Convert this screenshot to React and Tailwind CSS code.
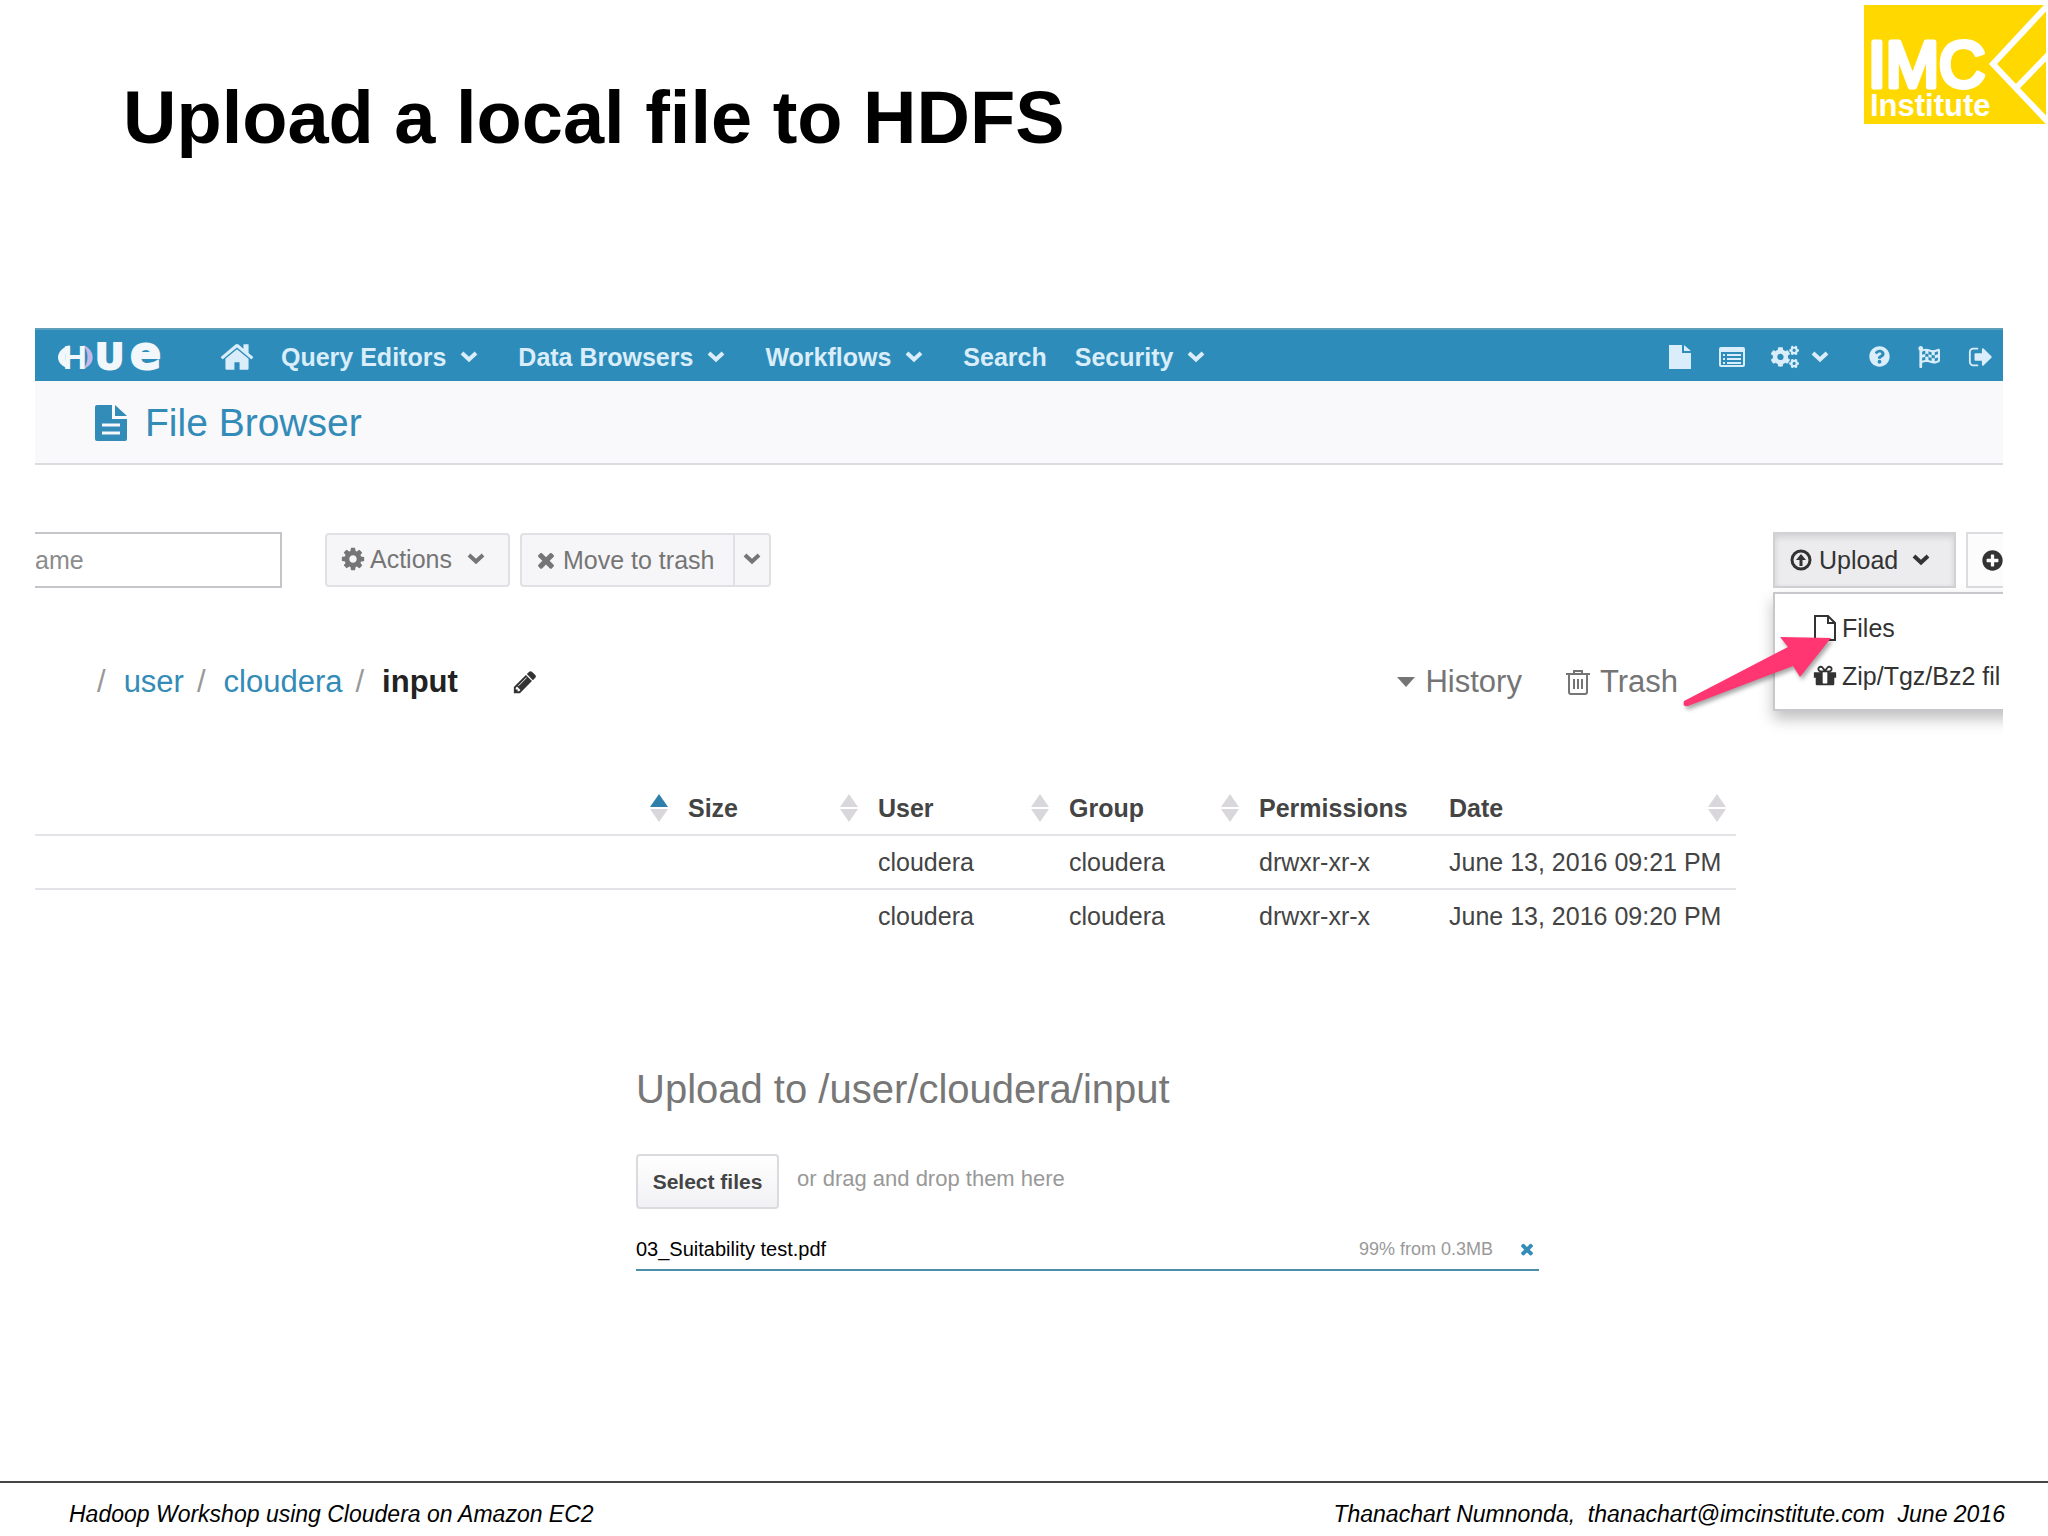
import { FaCogs, FaFlagCheckered, FaPlusCircle, FaQuestionCircle } from "react-icons/fa"

function Glyph({ d, className }) {
  return (
    <svg viewBox="0 0 1792 1792" fill="currentColor" aria-hidden="true" className={className}>
      <path d={d} />
    </svg>
  )
}

const glyphs = {
  home: "M1472 992v480q0 26-19 45t-45 19h-384v-384h-256v384h-384q-26 0-45-19t-19-45v-480q0-1 .5-3t.5-3l575-474 575 474q1 2 1 6zm223-69l-62 74q-8 9-21 11h-3q-13 0-21-7l-692-577-692 577q-12 8-24 7-13-2-21-11l-62-74q-8-10-7-23.5t11-21.5l719-599q32-26 76-26t76 26l244 204v-195q0-14 9-23t23-9h192q14 0 23 9t9 23v408l219 182q10 8 11 21.5t-7 23.5z",
  cog: "M1152 896q0-106-75-181t-181-75-181 75-75 181 75 181 181 75 181-75 75-181zm512-109v222q0 12-8 23t-20 13l-185 28q-19 54-39 91 35 50 107 138 10 12 10 25t-9 23q-27 37-99 108t-94 71q-12 0-26-9l-138-108q-44 23-91 38-16 136-29 186-7 28-36 28h-222q-14 0-24.5-8.5t-11.5-21.5l-28-184q-49-16-90-37l-141 107q-10 9-25 9-14 0-25-11-126-114-165-168-7-10-7-23 0-12 8-23 15-21 51-66.5t54-70.5q-27-50-41-99l-183-27q-13-2-21-12.5t-8-23.5v-222q0-12 8-23t19-13l186-28q14-46 39-92-40-57-107-138-10-12-10-24 0-10 9-23 26-36 98.5-107.5t94.5-71.5q13 0 26 10l138 107q44-23 91-38 16-136 29-186 7-28 36-28h222q14 0 24.5 8.5t11.5 21.5l28 184q49 16 90 37l142-107q9-9 24-9 13 0 25 10 129 119 165 170 7 8 7 22 0 12-8 23-15 21-51 66.5t-54 70.5q26 50 41 98l183 28q13 2 21 12.5t8 23.5z",
  times: "M1490 1322q0 40-28 68l-136 136q-28 28-68 28t-68-28l-294-294-294 294q-28 28-68 28t-68-28l-136-136q-28-28-28-68t28-68l294-294-294-294q-28-28-28-68t28-68l136-136q28-28 68-28t68 28l294 294 294-294q28-28 68-28t68 28l136 136q28 28 28 68t-28 68l-294 294 294 294q28 28 28 68z",
  pencil: "M491 1536l91-91-235-235-91 91v107h128v128h107zm523-928q0-22-22-22-10 0-17 7l-542 542q-7 7-7 17 0 22 22 22 10 0 17-7l542-542q7-7 7-17zm-54-192l416 416-832 832h-416v-416zm683 96q0 53-37 90l-166 166-416-416 166-165q36-38 90-38 53 0 91 38l235 234q37 39 37 91z",
  gift: "M1056 1356v-716h-320v716q0 25 18 38.5t46 13.5h192q28 0 46-13.5t18-38.5zm-456-844h195l-126-161q-26-31-69-31-40 0-68 28t-28 68 28 68 68 28zm688-96q0-40-28-68t-68-28q-43 0-69 31l-125 161h194q40 0 68-28t28-68zm376 256v320q0 14-9 23t-23 9h-96v416q0 40-28 68t-68 28h-1088q-40 0-68-28t-28-68v-416h-96q-14 0-23-9t-9-23v-320q0-14 9-23t23-9h440q-93 0-158.5-65.5t-65.5-158.5 65.5-158.5 158.5-65.5q107 0 168 77l128 165 128-165q61-77 168-77 93 0 158.5 65.5t65.5 158.5-65.5 158.5-158.5 65.5h440q14 0 23 9t9 23z",
  signOut: "M704 1440q0 4 1 20t.5 26.5-3 23.5-10 19.5-20.5 6.5h-320q-119 0-203.5-84.5t-84.5-203.5v-704q0-119 84.5-203.5t203.5-84.5h320q13 0 22.5 9.5t9.5 22.5q0 4 1 20t.5 26.5-3 23.5-10 19.5-20.5 6.5h-320q-66 0-113 47t-47 113v704q0 66 47 113t113 47h312l11.5 1 11.5 3 8 5.5 7 9 2 13.5zm928-544q0 26-19 45l-544 544q-19 19-45 19t-45-19-19-45v-288h-448q-26 0-45-19t-19-45v-384q0-26 19-45t45-19h448v-288q0-26 19-45t45-19 45 19l544 544q19 19 19 45z",
}

function Chevron() {
  return (
    <svg viewBox="0 0 18 12" fill="none" stroke="currentColor" strokeWidth="4" aria-hidden="true" className="w-[18px] h-3 shrink-0">
      <path d="M2 2 L9 8.5 L16 2" />
    </svg>
  )
}

function ImcLogo() {
  return (
    <svg viewBox="0 0 182 119" role="img" aria-label="IMC Institute" className="w-[182px] h-[119px]">
      <rect width="182" height="119" fill="#ffd800" />
      <g fill="none" stroke="#fff" strokeWidth="6">
        <path d="M184 0 L129 59 L184 117" />
        <path d="M152 83 L184 50" />
      </g>
      <g fill="#fff" stroke="#fff" strokeLinejoin="round" className="font-['Liberation_Sans',Arial,sans-serif]">
        <text x="4" y="82" fontSize="64" strokeWidth="5">IMC</text>
        <text x="6" y="111" fontSize="31" strokeWidth="0" className="font-bold">Institute</text>
      </g>
    </svg>
  )
}

function HueLogo() {
  return (
    <svg viewBox="0 0 108 28" role="img" aria-label="HUE" className="w-[108px] h-7 overflow-visible">
      <path d="M12 2 C-4 7 -4 22 12 26 C6 20 6 8 12 2Z" fill="#f2f7fb" />
      <path d="M25 2 C38 7 38 22 25 26 C31 20 31 8 25 2Z" fill="#c3b8ea" />
      <g fill="#f2f7fb" stroke="#f2f7fb">
        <text x="5" y="26" fontSize="33" strokeWidth="0" className="font-['Liberation_Sans',Arial,sans-serif] font-bold">H</text>
        <text x="37" y="26" fontSize="36" strokeWidth="2" className="font-['DejaVu_Sans',sans-serif] font-bold">U</text>
        <text x="72" y="26" fontSize="46" strokeWidth="2" className="font-['DejaVu_Sans',sans-serif] font-bold">e</text>
      </g>
    </svg>
  )
}

function NavMenu({ label }) {
  return (
    <button className="flex items-center gap-[14px]">
      {label}
      <Chevron />
    </button>
  )
}

function Sorter({ asc }) {
  return (
    <svg viewBox="0 0 18 28" aria-hidden="true" className="w-[18px] h-7">
      <path d="M9 0 L18 13 H0Z" fill={asc ? "#2e80ab" : "#dad7dc"} />
      <path d="M9 28 L18 15 H0Z" fill="#dad7dc" />
    </svg>
  )
}

const columns = [
  { label: "", width: "", sort: "asc" },
  { label: "Size", width: "w-[190px]", sort: "both" },
  { label: "User", width: "w-[191px]", sort: "both" },
  { label: "Group", width: "w-[190px]", sort: "both" },
  { label: "Permissions", width: "w-[190px]", sort: null },
  { label: "Date", width: "w-[297px]", sort: "both" },
]

const rows = [
  ["", "", "cloudera", "cloudera", "drwxr-xr-x", "June 13, 2016 09:21 PM"],
  ["", "", "cloudera", "cloudera", "drwxr-xr-x", "June 13, 2016 09:20 PM"],
]

function NavBar() {
  return (
    <nav className="flex items-center h-[53px] pt-0.5 pl-[23px] pr-[9px] bg-[#2d8cb9] border-t-2 border-[#5d9fba] text-[25px] leading-8 font-bold text-[#d9edfa]">
      <a href="#hue"><HueLogo /></a>
      <a href="#home" aria-label="Home" className="ml-[53px]">
        <Glyph d={glyphs.home} className="w-9 h-9" />
      </a>
      <div className="flex items-center gap-10 ml-[26px]">
        <NavMenu label="Query Editors" />
        <NavMenu label="Data Browsers" />
        <NavMenu label="Workflows" />
      </div>
      <a href="#search" className="ml-10">Search</a>
      <div className="ml-7">
        <NavMenu label="Security" />
      </div>

      <div className="flex items-center ml-auto">
        <a href="#documents" aria-label="Documents">
          <svg viewBox="0 0 22 24" fill="currentColor" className="w-[22px] h-6">
            <path d="M0 0 H13 V8 H22 V24 H0Z M15 0 L22 6 H15Z" />
          </svg>
        </a>
        <a href="#jobs" aria-label="Jobs" className="ml-7">
          <svg viewBox="0 0 26 20" fill="none" stroke="currentColor" className="w-[26px] h-5">
            <rect x="1" y="1" width="24" height="18" rx="1" strokeWidth="2" />
            <path d="M1 3 H25" strokeWidth="4" />
            <path d="M4 8 H6 M8 8 H22 M4 12 H6 M8 12 H22 M4 16 H6 M8 16 H22" strokeWidth="2" />
          </svg>
        </a>
        <button aria-label="Administration" className="flex items-center gap-3 ml-[26px]">
          <FaCogs className="w-7 h-6" />
          <Chevron />
        </button>
        <a href="#help" aria-label="Help" className="ml-10">
          <FaQuestionCircle className="size-[21px]" />
        </a>
        <a href="#tours" aria-label="Tours" className="ml-[26px]">
          <FaFlagCheckered className="w-[26px] h-[22px]" />
        </a>
        <a href="#logout" aria-label="Sign out" className="ml-[26px]">
          <Glyph d={glyphs.signOut} className="size-[26px]" />
        </a>
      </div>
    </nav>
  )
}

function UploadMenu() {
  return (
    <div className="relative">
      <button className="flex items-center w-[183px] h-14 px-[15px] bg-[#ececee] border-2 border-[#d2d0d4] shadow-[inset_0_3px_6px_rgba(0,0,0,0.12)] text-[#333]">
        <svg viewBox="0 0 22 22" fill="none" stroke="currentColor" strokeWidth="3" className="w-[22px] h-[22px]">
          <circle cx="11" cy="11" r="9" />
          <path d="M11 17 V8" />
          <path d="M6 11 L11 5 L16 11Z" fill="currentColor" stroke="none" />
        </svg>
        <span className="ml-[7px] mr-[14px]">Upload</span>
        <Chevron />
      </button>

      <ul className="absolute left-0 top-[60px] w-[260px] pt-[10px] pb-[9px] bg-white border-2 border-[#c9c7cb] shadow-[0_8px_14px_rgba(0,0,0,0.25)] text-[#333]">
        <li>
          <a href="#files" className="flex items-center gap-1.5 h-12 pl-[39px]">
            <svg viewBox="0 0 22 26" fill="none" stroke="currentColor" strokeWidth="2" className="w-[22px] h-[26px]">
              <path d="M1 1 H14 L21 8 V25 H1Z M14 1 V8 H21" />
            </svg>
            Files
          </a>
        </li>
        <li>
          <a href="#archive" className="flex items-center gap-1 h-12 pl-[37px] whitespace-nowrap">
            <Glyph d={glyphs.gift} className="size-[26px]" />
            Zip/Tgz/Bz2 fil
          </a>
        </li>
      </ul>

      {/* Pointer to the Files entry */}
      <svg viewBox="0 0 160 80" aria-hidden="true" className="absolute -left-[94px] top-[102px] w-40 h-20 drop-shadow-[2px_3px_2px_rgba(0,0,0,0.35)]">
        <path d="M5 67 L109 13 L101 3 L152 4 L121 43 L114 32 L9 72 Q3 73 5 67Z" fill="#ff3672" />
      </svg>
    </div>
  )
}

function Toolbar() {
  return (
    <div className="flex items-center pt-[67px] text-[25px] leading-8 text-[#757575]">
      <input
        type="text"
        aria-label="Search for file name"
        placeholder="ame"
        className="w-[247px] h-14 border-2 border-l-0 border-[#c6c4c9] placeholder:text-[#8c8c8c] outline-none"
      />
      <button className="flex items-center w-[185px] h-[54px] ml-[43px] pb-0.5 pl-[13px] bg-[#f6f5f8] border-2 border-[#e2e0e4] rounded-sm">
        <Glyph d={glyphs.cog} className="w-[26px] h-[26px]" />
        <span className="ml-1">Actions</span>
        <span className="ml-[15px]"><Chevron /></span>
      </button>
      <div className="flex ml-[10px] h-[54px] bg-[#f6f5f8] border-2 border-[#e2e0e4] rounded-sm">
        <button className="flex items-center w-[211px] pl-3">
          <Glyph d={glyphs.times} className="w-6 h-6" />
          <span className="ml-[5px]">Move to trash</span>
        </button>
        <button aria-label="More trash options" className="flex items-center justify-center w-9 pb-0.5 border-l-2 border-[#e2e0e4]">
          <Chevron />
        </button>
      </div>

      <div className="flex gap-[10px] ml-auto">
        <UploadMenu />
        <button aria-label="New" className="flex items-center w-[37px] h-14 pl-[14px] border-2 border-r-0 border-[#dddbdf] bg-[#fcfcfd] text-[#333]">
          <FaPlusCircle className="size-[21px] shrink-0" />
        </button>
      </div>
    </div>
  )
}

function Breadcrumbs() {
  return (
    <div className="flex items-center mt-[74px] pl-[62px] pr-[325px] text-[31px] leading-10">
      <ol className="flex gap-[13px]">
        <li className="flex gap-[18px]">
          <span className="text-[#999]">/</span>
          <a href="#user" className="text-[#338bb8]">user</a>
        </li>
        <li className="flex gap-[18px]">
          <span className="text-[#999]">/</span>
          <a href="#cloudera" className="text-[#338bb8]">cloudera</a>
        </li>
        <li className="flex gap-[18px]">
          <span className="text-[#999]">/</span>
          <strong className="text-[#222]">input</strong>
        </li>
      </ol>
      <button aria-label="Edit path" className="ml-[54px] text-[#333]">
        <Glyph d={glyphs.pencil} className="w-[26px] h-[26px]" />
      </button>

      <div className="flex items-center gap-11 ml-auto text-[#757575]">
        <button className="flex items-center gap-[10px]">
          <svg viewBox="0 0 18 10" fill="currentColor" className="w-[18px] h-[10px]">
            <path d="M0 0 H18 L9 10Z" />
          </svg>
          History
        </button>
        <a href="#trash" className="flex items-center gap-[10px]">
          <svg viewBox="0 0 24 26" fill="none" stroke="currentColor" strokeWidth="2" className="w-6 h-[26px]">
            <path d="M0 5 H24 M8 5 V2 H16 V5 M3 5 V23 Q3 25 5 25 H19 Q21 25 21 23 V5 M8 10 V20 M12 10 V20 M16 10 V20" />
          </svg>
          Trash
        </a>
      </div>
    </div>
  )
}

function FileTable() {
  return (
    <div className="mt-[79px] mr-[267px]">
      <table className="w-full table-fixed text-left text-[25px] leading-8 text-[#444]">
        <thead>
          <tr className="h-[54px] border-b-2 border-[#e5e3e7]">
            {columns.map((col) => (
              <th key={col.label} className={`${col.width} p-0 pl-[10px] pr-[10px]`}>
                <div className="flex items-center justify-between">
                  <span>{col.label}</span>
                  {col.sort && <Sorter asc={col.sort === "asc"} />}
                </div>
              </th>
            ))}
          </tr>
        </thead>
        <tbody>
          {rows.map((row) => (
            <tr key={row[5]} className="h-[54px] border-b-2 border-[#e5e3e7] last:h-[52px] last:border-b-0">
              {row.map((cell, i) => (
                <td key={i} className="p-0 pl-[10px] whitespace-nowrap">{cell}</td>
              ))}
            </tr>
          ))}
        </tbody>
      </table>
    </div>
  )
}

function UploadPanel() {
  return (
    <section className="mt-[124px] ml-[601px] mr-[464px]">
      <h3 className="text-[40px] leading-[48px] text-[#777]">Upload to /user/cloudera/input</h3>
      <div className="flex items-center gap-[18px] mt-[41px] text-[21px] leading-7">
        <button className="w-[143px] h-[55px] bg-linear-to-b from-white to-[#f1f0f3] border-2 border-[#dcdadf] rounded-sm font-bold text-[#444]">
          Select files
        </button>
        <span className="pb-1.5 text-[22px] text-[#999]">or drag and drop them here</span>
      </div>
      <div className="flex items-center mt-5 h-[42px] border-b-2 border-[#4a90ad]">
        <span className="text-[20px] text-black">03_Suitability test.pdf</span>
        <span className="ml-auto text-[18px] text-[#999]">99% from 0.3MB</span>
        <button aria-label="Remove file" className="ml-[25px] mr-[3px] text-[#338bb8]">
          <Glyph d={glyphs.times} className="size-[18px]" />
        </button>
      </div>
    </section>
  )
}

export default function App() {
  return (
    <div className="flex flex-col min-h-screen bg-white font-['Liberation_Sans',Arial,sans-serif]">
      <header className="flex items-start justify-between pl-[123px] pr-[2px]">
        <h1 className="mt-[78px] pb-0.5 text-[74px] leading-[80px] font-bold text-black">Upload a local file to HDFS</h1>
        <div className="pt-[5px]"><ImcLogo /></div>
      </header>

      <main className="mt-[168px] ml-[35px] mr-[45px] overflow-hidden">
        <NavBar />
        <div className="flex items-center gap-[18px] h-[84px] pt-0.5 pl-[60px] bg-[#f9f8fb] border-b-2 border-[#dddbdf] text-[#338bb8]">
          <svg viewBox="0 0 32 36" fill="currentColor" aria-hidden="true" className="w-8 h-9">
            <path d="M0 2 Q0 0 2 0 H17 V14 H32 V34 Q32 36 30 36 H2 Q0 36 0 34Z M20 0 L32 11 H20Z" />
            <path d="M7 20 H25 M7 28 H25" stroke="#f9f8fb" strokeWidth="3" />
          </svg>
          <h2 className="text-[39px] leading-[48px]">File Browser</h2>
        </div>
        <Toolbar />
        <Breadcrumbs />
        <FileTable />
        <UploadPanel />
      </main>

      <footer className="flex justify-between mt-auto pt-4 pb-[7px] pl-[69px] pr-[43px] border-t-2 border-[#444] text-[23px] leading-[30px] italic text-black">
        <span>Hadoop Workshop using Cloudera on Amazon EC2</span>
        <span className="whitespace-pre">Thanachart Numnonda,  thanachart@imcinstitute.com  June 2016</span>
      </footer>
    </div>
  )
}
